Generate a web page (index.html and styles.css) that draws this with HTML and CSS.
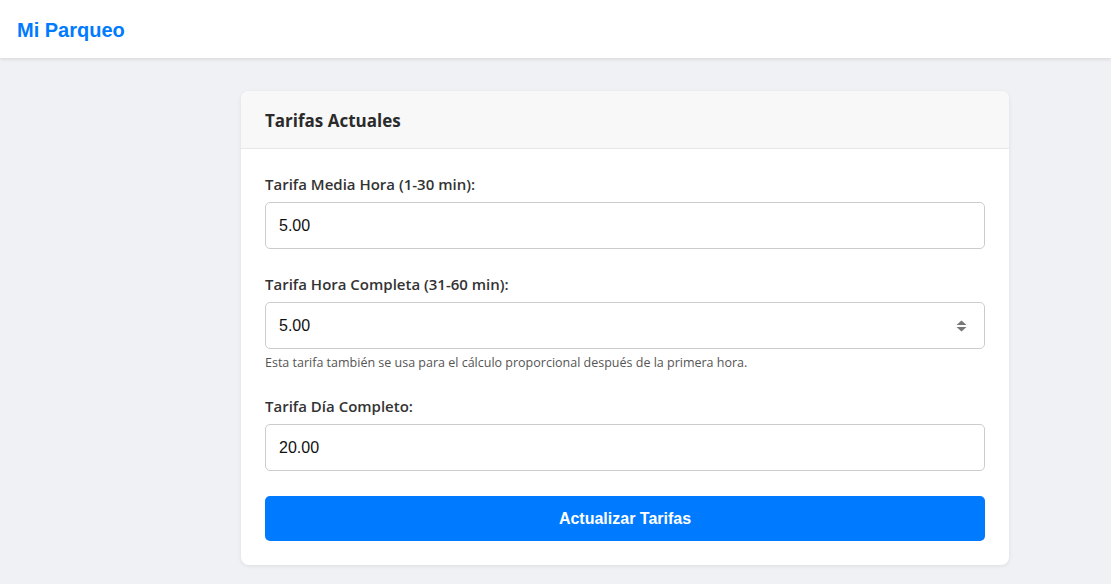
FILE: index.html
```html
<!DOCTYPE html>
<html lang="es">
<head>
<meta charset="utf-8">
<title>Mi Parqueo</title>
<link rel="stylesheet" href="styles.css">
</head>
<body>
<nav class="navbar">
  <span class="brand">Mi Parqueo</span>
</nav>
<main class="main">
  <section class="card">
    <header class="card-header">
      <h2 class="card-title">Tarifas Actuales</h2>
    </header>
    <form class="card-body">
      <div class="group">
        <label class="label">Tarifa Media Hora (1-30 min):</label>
        <div class="input">5.00</div>
      </div>
      <div class="group">
        <label class="label">Tarifa Hora Completa (31-60 min):</label>
        <div class="input">5.00
          <svg class="spin" width="11" height="16" viewBox="0 0 11 16"><path d="M5.5 2.5 L10.5 7 H0.5 Z" fill="#777"/><path d="M0.5 9 H10.5 L5.5 13.5 Z" fill="#777"/></svg>
        </div>
        <p class="help">Esta tarifa también se usa para el cálculo proporcional después de la primera hora.</p>
      </div>
      <div class="group group-last">
        <label class="label">Tarifa Día Completo:</label>
        <div class="input">20.00</div>
      </div>
      <button class="btn" type="button">Actualizar Tarifas</button>
    </form>
  </section>
</main>
</body>
</html>
```
FILE: styles.css
```css
* { box-sizing: border-box; }
html, body { margin: 0; padding: 0; }
body {
  background: #f0f1f4;
  font-family: "Open Sans", "Noto Sans", sans-serif;
  color: #333;
  height: 584px;
  overflow: hidden;
}
.navbar {
  height: 58px;
  background: #fff;
  display: flex;
  align-items: center;
  padding: 0 17px;
  box-shadow: 0 1px 4px rgba(0,0,0,0.12);
  position: relative;
}
.brand {
  font-family: "Liberation Sans", Arial, sans-serif;
  font-weight: bold;
  font-size: 20px;
  color: #007bff;
  position: relative;
  top: 1px;
}
.main {
  display: flex;
  justify-content: flex-start;
  padding-top: 33px;
  padding-left: 241px;
}
.card {
  width: 768px;
  background: #fff;
  border-radius: 8px;
  box-shadow: 0 1px 4px rgba(0,0,0,0.08);
  overflow: hidden;
}
.card-header {
  background: #f8f8f8;
  border-bottom: 1px solid #e8e8e8;
  height: 58px;
  display: flex;
  align-items: center;
  padding: 0 24px;
}
.card-title {
  margin: 0;
  font-size: 17px;
  font-weight: 700;
  color: #2b2b2b;
  position: relative;
  top: 1px;
}
.card-body {
  padding: 24px 24px 24px;
  display: flex;
  flex-direction: column;
}
.group { margin-bottom: 24px; display: flex; flex-direction: column; }
.group-last { margin-bottom: 25px; }
.label {
  font-size: 15px;
  line-height: 22px;
  font-weight: 600;
  color: #333;
  margin-bottom: 7px;
}
.input {
  height: 47px;
  border: 1px solid #cccccc;
  border-radius: 5px;
  padding: 0 13px;
  display: flex;
  align-items: center;
  justify-content: space-between;
  font-family: "Liberation Sans", Arial, sans-serif;
  font-size: 16px;
  color: #111;
}
.spin { margin-right: 4px; }
.help {
  margin: 6px 0 0;
  font-size: 12.5px;
  line-height: 16px;
  color: #555;
}
.btn {
  height: 45px;
  border: none;
  border-radius: 5px;
  background: #007bff;
  color: #fff;
  font-family: "Liberation Sans", Arial, sans-serif;
  font-weight: bold;
  font-size: 16px;
}
```
